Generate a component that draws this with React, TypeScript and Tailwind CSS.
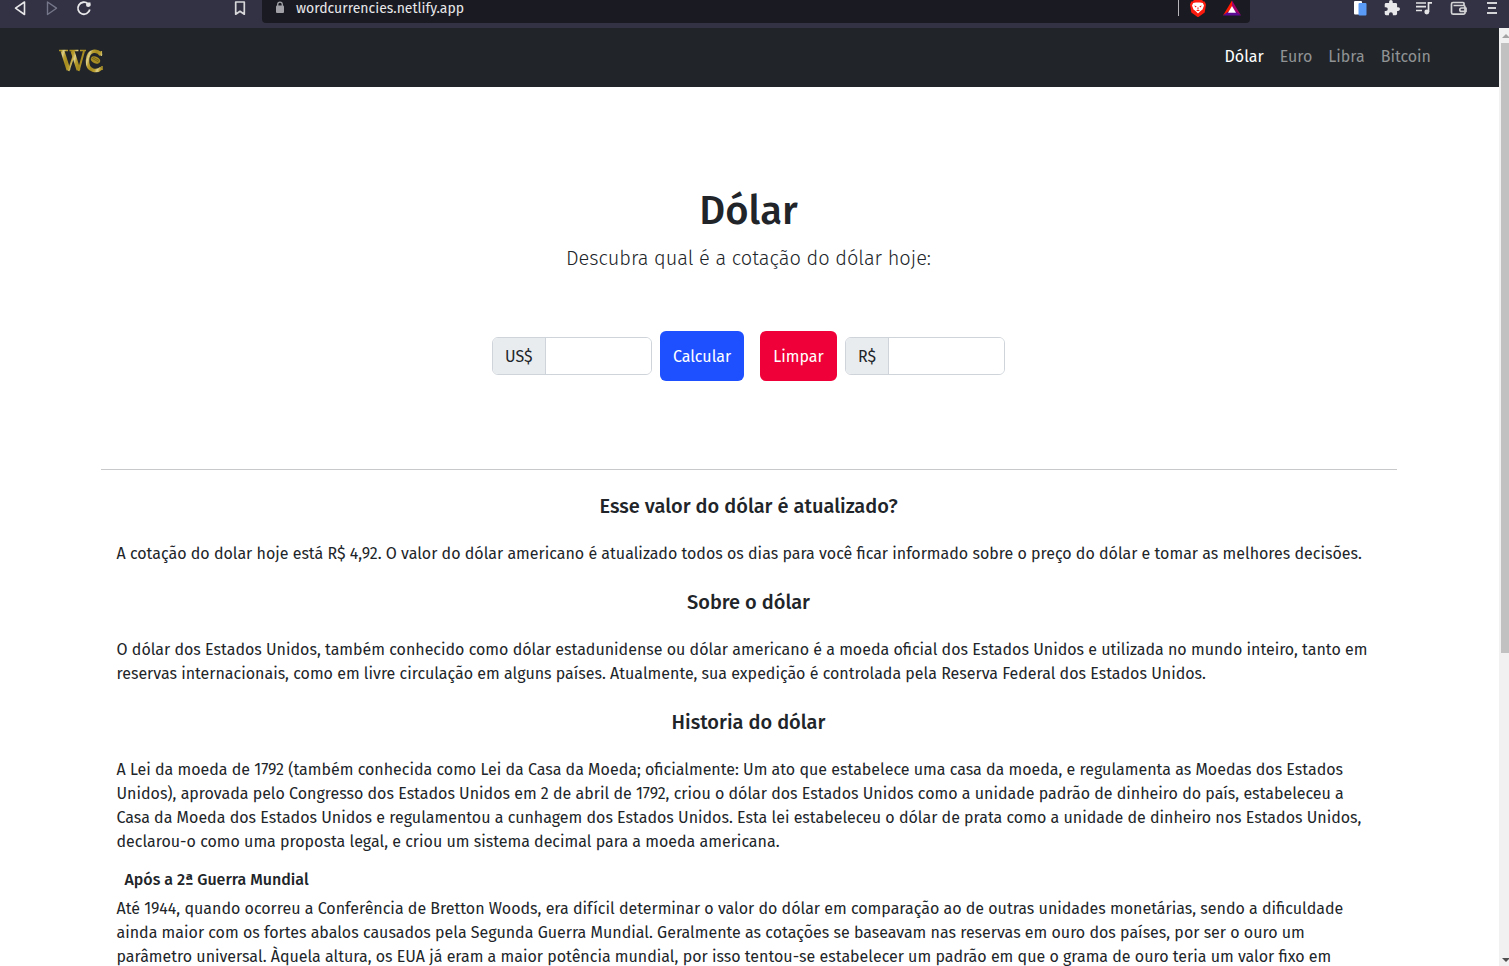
import { useState } from "react";

const navLinks = ["Euro", "Libra", "Bitcoin"];

function BrowserBar() {
  return (
    <div className="flex h-7 shrink-0 items-start bg-[#323244] text-[#e8e8ea]">
      <button aria-label="Voltar" className="ml-3 h-4 w-4">
        <svg viewBox="0 0 16 16" className="h-4 w-4" fill="none" stroke="currentColor" strokeWidth="1.6" strokeLinejoin="round">
          <path d="M12.500 2v12.500L3.500 8.200z" />
        </svg>
      </button>
      <button aria-label="Avançar" className="ml-4 h-4 w-4 text-[#76768a]">
        <svg viewBox="0 0 16 16" className="h-4 w-4" fill="none" stroke="currentColor" strokeWidth="1.4" strokeLinejoin="round">
          <path d="M3.500 2v12.500L12.500 8.200z" />
        </svg>
      </button>
      <button aria-label="Recarregar" className="ml-4 h-4 w-4">
        <svg viewBox="0 0 16 16" className="h-4 w-4" fill="none" stroke="currentColor" strokeWidth="1.8">
          <path d="M12 3.800A6 6 0 1 0 13.800 9.500" />
          <circle cx="12.200" cy="4.700" r="2.200" fill="currentColor" stroke="none" />
          <path d="M12.500 2.500H14.500V6.500z" fill="currentColor" stroke="none" />
        </svg>
      </button>
      <button aria-label="Favoritos" className="ml-[140px] h-4 w-4">
        <svg viewBox="0 0 16 16" className="h-4 w-4" fill="none" stroke="#d8d8da" strokeWidth="1.7" strokeLinejoin="round">
          <path d="M3.700 2h8.600v12.200L8 11.300 3.700 14.200z" />
        </svg>
      </button>
      <div className="ml-[14px] flex h-[23px] flex-1 items-start rounded-b bg-[#1a1a22]">
        <svg viewBox="0 0 16 16" className="ml-[10px] h-4 w-4 text-[#a0a0a6]">
          <rect x="4" y="5.500" width="8" height="7.500" rx="1" fill="currentColor" />
          <path d="M5.700 6V4.500a2.300 2.300 0 0 1 4.600 0V6" fill="none" stroke="currentColor" strokeWidth="1.300" />
        </svg>
        <span className="ml-2 flex-1 text-[14px] leading-[18px]">wordcurrencies.netlify.app</span>
        <span className="mr-[11px] h-4 w-px bg-[#b5b5bb]" />
        <svg viewBox="0 0 16 17" className="h-[17px] w-4">
          <path d="M4 0h8l1.500 1.500h1.200L16 4.500l-1.300 8L8 17.300 1.300 12.500 0 4.500l1.300-3h1.200z" fill="#fb1b0e" />
          <path d="M3.200 3 6 2.500h4l2.800.5L14 5.500l-1.500 4-2 1.500L8 13.500 5.500 11l-2-1.500L2 5.500z" fill="#fff" />
          <path d="M4.200 5.500l2.500.8-1.200 1.100zM11.800 5.500l-2.500.8 1.200 1.100zM7.300 7.500h1.400L8.300 9.500h-.6zM6 10.600l2-.8 2 .8-2 .6z" fill="#fb1b0e" />
        </svg>
        <svg viewBox="0 0 18 16" className="ml-[17px] mr-[9px] h-4 w-[18px]">
          <path d="M9 .5 0 15.500 9 10z" fill="#ff1a00" />
          <path d="M9 .5l9 15L9 10z" fill="#a3006a" />
          <path d="M0 15.500h18L9 9z" fill="#5b0a94" />
          <path d="M9 6l4 6.700H5z" fill="#fff" />
        </svg>
      </div>
      <div className="ml-[102px] mr-[9px] flex gap-4">
        <svg viewBox="0 0 16 16" className="h-4 w-4">
          <rect x="2" y="1" width="8" height="13.500" rx="1" fill="#fff" />
          <rect x="6.500" y="3" width="8" height="12.500" rx="1" fill="#5b9bf8" />
        </svg>
        <svg viewBox="1 1 22 22" className="h-4 w-4" fill="currentColor">
          <path d="M20.500 11H19V7a2 2 0 0 0-2-2h-4V3.500a2.500 2.500 0 0 0-5 0V5H4a2 2 0 0 0-2 2v3.800h1.500a2.700 2.700 0 0 1 0 5.400H2V20a2 2 0 0 0 2 2h3.800v-1.500a2.700 2.700 0 0 1 5.400 0V22H17a2 2 0 0 0 2-2v-4h1.500a2.500 2.500 0 0 0 0-5z" />
        </svg>
        <svg viewBox="0 0 18 16" className="h-4 w-[18px]" fill="none" stroke="#e4e4e6" strokeWidth="1.700">
          <path d="M0 3h10M0 6.700h10M0 10.500h6M12.500 12V2.800h3.500" />
          <circle cx="10.800" cy="12" r="1.600" fill="#e4e4e6" />
        </svg>
        <svg viewBox="0 0 18 16" className="h-4 w-[18px]" fill="none" stroke="#d4d4d6" strokeWidth="1.700" strokeLinejoin="round">
          <path d="M14 5V3.500a1 1 0 0 0-1-1H3A1.500 1.500 0 0 0 1.500 4v8.500A1.800 1.800 0 0 0 3.300 14.200H13.500a1.500 1.500 0 0 0 1.500-1.500V7a1.500 1.500 0 0 0-1.500-1.500H3.500" />
          <path d="M16 8h-4.500a1.700 1.700 0 0 0 0 3.400H16z" />
        </svg>
        <svg viewBox="0 0 16 16" className="h-4 w-4" fill="none" stroke="#d4d4d6" strokeWidth="1.800">
          <path d="M3 3h10M4 8h8M3 13h10" />
        </svg>
      </div>
    </div>
  );
}

function Logo() {
  return (
    <svg viewBox="0 0 46 26" className="h-[26px] w-[46px]" role="img" aria-label="WC">
      <defs>
        <linearGradient id="gold" gradientUnits="userSpaceOnUse" x1="0" y1="0" x2="6" y2="2" spreadMethod="reflect">
          <stop offset="0" stopColor="#a58a1e" />
          <stop offset="0.600" stopColor="#b79c30" />
          <stop offset="1" stopColor="#ddd08a" />
        </linearGradient>
      </defs>
      <g fill="none" stroke="url(#gold)">
        <path d="M1 2.500h9M11.500 2.500h9M22 2.500h6" strokeWidth="1.500" />
        <path d="M4.500 3l6 19M14.500 3l6 19" strokeWidth="4" />
        <path d="M10.500 23l5-15M20.500 23L26 3" strokeWidth="2" />
        <path d="M43 7C40 1.500 30 1 29.500 12.500s10 11.500 14 7.500" strokeWidth="3.500" />
        <path d="M43.300 3v5M44 18v4" strokeWidth="1.500" />
      </g>
      <ellipse cx="37.500" cy="12" rx="5" ry="3.400" fill="#a88d24" transform="rotate(25 37.500 12)" />
      <path d="M33.500 10l7 4M35 9l6 3.500" stroke="#6f5e18" strokeWidth=".8" />
    </svg>
  );
}

function MoneyField({ id, symbol, value, onChange, readOnly }: { id: string; symbol: string; value: string; onChange?: (v: string) => void; readOnly?: boolean }) {
  return (
    <div className="flex h-[38px] w-40 overflow-hidden rounded-md border border-[#ced4da]">
      <label htmlFor={id} className="flex items-center border-r border-[#ced4da] bg-[#e9ecef] px-3 pt-px">{symbol}</label>
      <input id={id} value={value} readOnly={readOnly} onChange={(e) => onChange?.(e.target.value)} className="w-0 min-w-0 flex-1 bg-white px-2 outline-none" />
    </div>
  );
}

function ScrollRail() {
  return (
    <div className="flex w-[10px] shrink-0 flex-col items-end bg-[#f1f1f1]" aria-hidden="true">
      <svg viewBox="0 0 8 15" className="h-[15px] w-2 shrink-0"><path d="M1 10l4-4 4 4z" fill="#a3a3a3" /></svg>
      <div className="h-[65%] w-2 bg-[#c1c1c1]" />
      <svg viewBox="0 0 8 15" className="mt-auto h-[15px] w-2 shrink-0"><path d="M1 7l4 4 4-4z" fill="#505050" /></svg>
    </div>
  );
}

export default function App() {
  const [usd, setUsd] = useState("");
  const [brl, setBrl] = useState("");
  return (
    <div className="flex h-screen flex-col overflow-hidden bg-white font-['Fira_Sans','Noto_Sans',sans-serif] text-base leading-6 text-[#212529]">
      <BrowserBar />
      <div className="flex min-h-0 flex-1">
        <div className="min-w-0 flex-1 overflow-hidden">
          <header className="flex h-[59px] items-center justify-between bg-[#212529] pl-[58px] pr-[68px]">
            <a href="#inicio" className="mt-[6px]"><Logo /></a>
            <nav className="flex gap-4 pb-[2px] text-[#909294]">
              <a href="#dolar" className="text-white">Dólar</a>
              {navLinks.map((l) => <a key={l} href={`#${l.toLowerCase()}`}>{l}</a>)}
            </nav>
          </header>
          <main className="mx-auto w-full max-w-[1298px] pt-[98px] pr-[2px]">
            <h1 className="text-center text-[40px] leading-[52px] font-medium">Dólar</h1>
            <p className="mt-[6px] text-center text-[20px] leading-[30px] font-light">Descubra qual é a cotação do dólar hoje:</p>
            <form
              className="mt-[58px] flex items-center justify-center gap-2"
              onSubmit={(e) => {
                e.preventDefault();
                setBrl((Number(usd.replace(",", ".")) * 4.92).toFixed(2));
              }}
            >
              <MoneyField id="usd" symbol="US$" value={usd} onChange={setUsd} />
              <button type="submit" className="mr-2 h-[50px] w-[84px] rounded-md bg-[#1e50ff] pt-px text-white">Calcular</button>
              <button type="button" onClick={() => { setUsd(""); setBrl(""); }} className="h-[50px] w-[77px] rounded-md bg-[#f00038] pt-px text-white">Limpar</button>
              <MoneyField id="brl" symbol="R$" value={brl} readOnly />
            </form>
            <hr className="mt-[88px] border-[#c8c9ca]" />
            <article className="px-4 pt-6">
              <h2 className="text-center text-[20px] leading-6 font-medium">Esse valor do dólar é atualizado?</h2>
              <p className="mt-6">A cotação do dolar hoje está R$ 4,92. O valor do dólar americano é atualizado todos os dias para você ficar informado sobre o preço do dólar e tomar as melhores decisões.</p>
              <h2 className="mt-6 text-center text-[20px] leading-6 font-medium">Sobre o dólar</h2>
              <p className="mt-6">
                O dólar dos Estados Unidos, também conhecido como dólar estadunidense ou dólar americano é a moeda oficial dos Estados Unidos e utilizada no mundo inteiro, tanto em reservas internacionais, como em livre circulação em alguns países. Atualmente, sua expedição é controlada pela Reserva Federal dos Estados Unidos.
              </p>
              <h2 className="mt-6 text-center text-[20px] leading-6 font-medium">Historia do dólar</h2>
              <p className="mt-6">
                A Lei da moeda de 1792 (também conhecida como Lei da Casa da Moeda; oficialmente: Um ato que estabelece uma casa da moeda, e regulamenta as Moedas dos Estados Unidos), aprovada pelo Congresso dos Estados Unidos em 2 de abril de 1792, criou o dólar dos Estados Unidos como a unidade padrão de dinheiro do país, estabeleceu a Casa da Moeda dos Estados Unidos e regulamentou a cunhagem dos Estados Unidos. Esta lei estabeleceu o dólar de prata como a unidade de dinheiro nos Estados Unidos, declarou-o como uma proposta legal, e criou um sistema decimal para a moeda americana.
              </p>
              <h3 className="mt-4 ml-2 leading-5 font-medium">Após a 2ª Guerra Mundial</h3>
              <p className="mt-[7px]">
                Até 1944, quando ocorreu a Conferência de Bretton Woods, era difícil determinar o valor do dólar em comparação ao de outras unidades monetárias, sendo a dificuldade ainda maior com os fortes abalos causados pela Segunda Guerra Mundial. Geralmente as cotações se baseavam nas reservas em ouro dos países, por ser o ouro um parâmetro universal. Àquela altura, os EUA já eram a maior potência mundial, por isso tentou-se estabelecer um padrão em que o grama de ouro teria um valor fixo em
              </p>
            </article>
          </main>
        </div>
        <ScrollRail />
      </div>
    </div>
  );
}
